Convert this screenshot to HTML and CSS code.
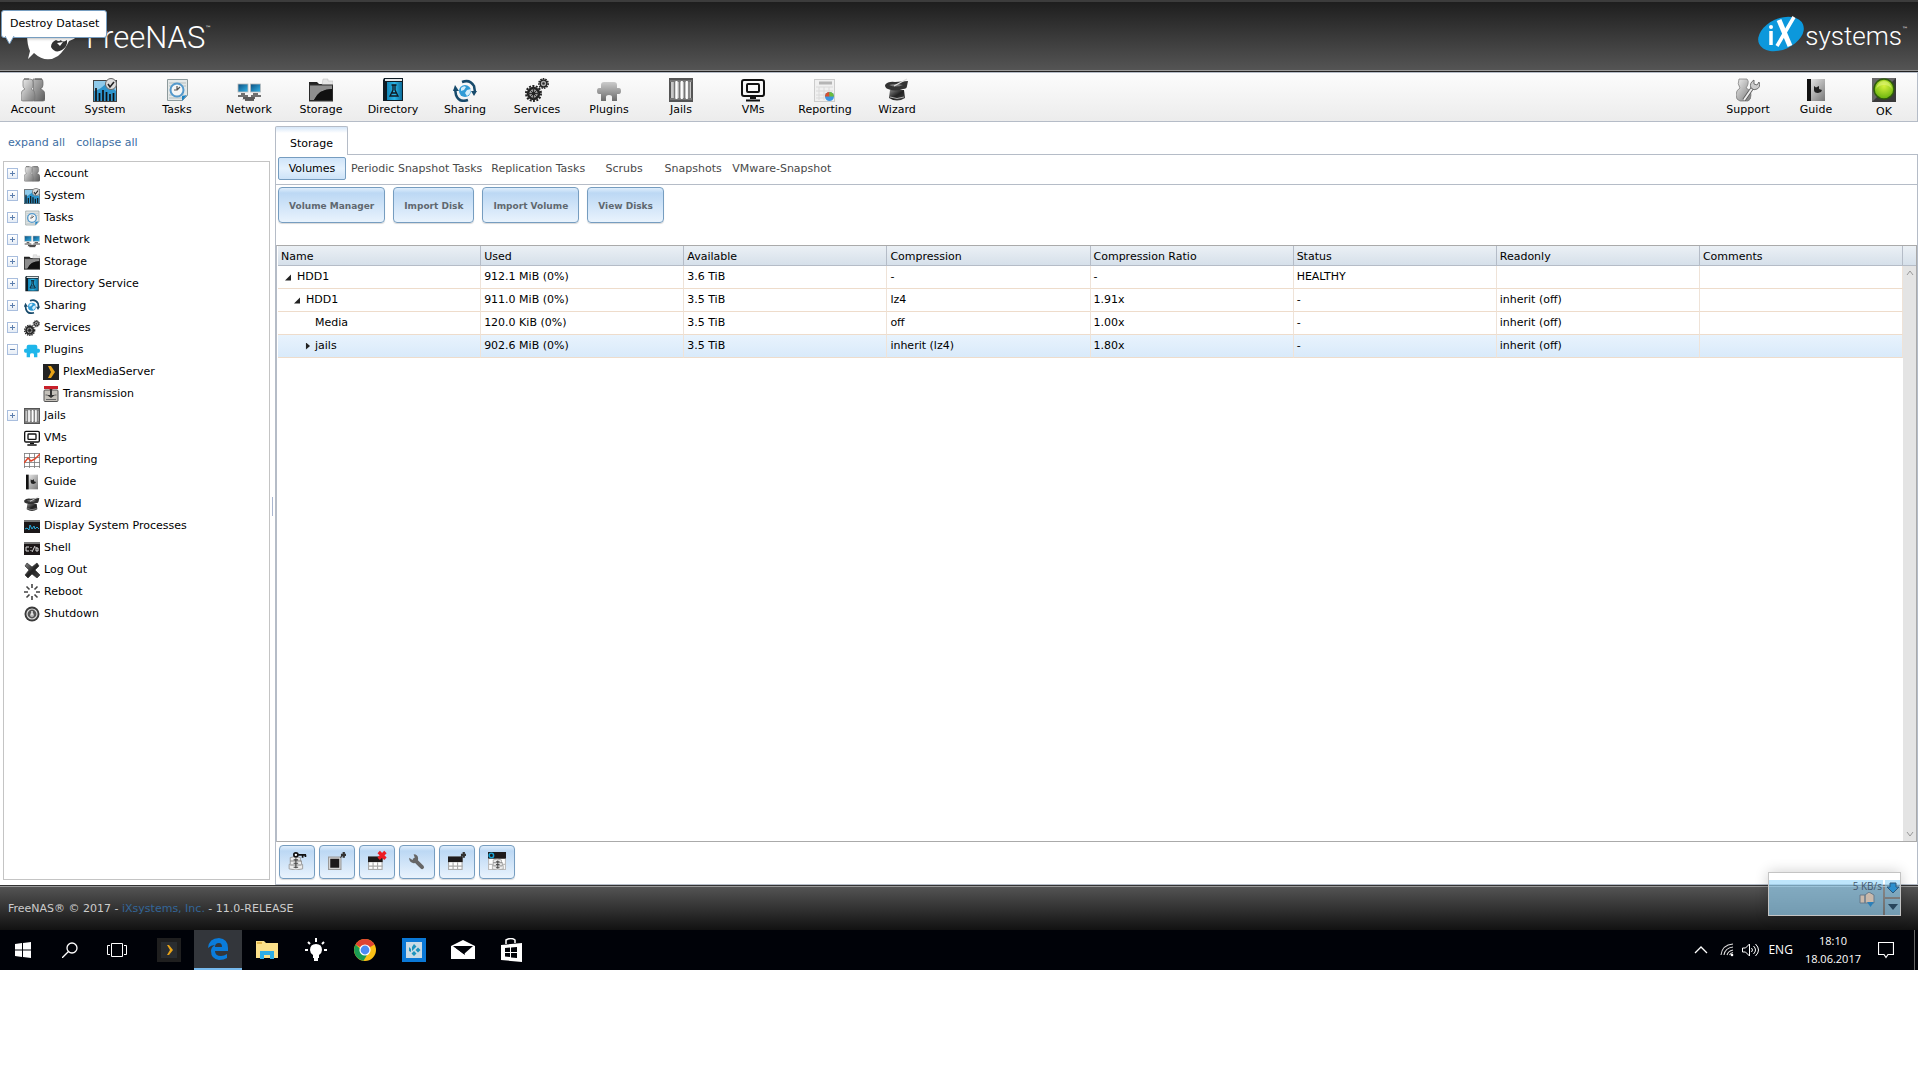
FILE: index.html
```html
<!DOCTYPE html>
<html lang="en">
<head>
    <meta charset="UTF-8">
    <meta name="viewport" content="width=device-width, initial-scale=1.0">
    <title>FreeNAS - Storage</title>
    <link rel="stylesheet" href="styles.css">
</head>
<body>
    <!-- icon set -->
    <svg class="sprite" width="0" height="0" aria-hidden="true">
        <defs>
            <linearGradient id="silver" x1="0" y1="0" x2="1" y2="1"><stop offset="0" stop-color="#f2f2f2"/><stop offset="1" stop-color="#777"/></linearGradient>
            <linearGradient id="silver2" x1="0" y1="0" x2="1" y2="1"><stop offset="0" stop-color="#bbb"/><stop offset="1" stop-color="#5a5a5a"/></linearGradient>
            <linearGradient id="dark" x1="0" y1="0" x2="1" y2="1"><stop offset="0" stop-color="#888"/><stop offset=".5" stop-color="#222"/><stop offset="1" stop-color="#444"/></linearGradient>
            <linearGradient id="sky" x1="0" y1="0" x2="1" y2="1"><stop offset="0" stop-color="#0b4f80"/><stop offset="1" stop-color="#35b5ea"/></linearGradient>
            <linearGradient id="book" x1="0" y1="0" x2="1" y2="0"><stop offset="0" stop-color="#1286b8"/><stop offset=".5" stop-color="#2bb4e6"/><stop offset="1" stop-color="#0c6c9a"/></linearGradient>
            <linearGradient id="plug" x1="0" y1="0" x2="0" y2="1"><stop offset="0" stop-color="#ccc"/><stop offset="1" stop-color="#6b6b6b"/></linearGradient>
            <radialGradient id="lamp" cx=".5" cy=".35" r=".7"><stop offset="0" stop-color="#d6f23c"/><stop offset="1" stop-color="#5fae0a"/></radialGradient>
        </defs>
        <symbol id="i-account" viewBox="0 0 24 24">
            <path d="M12 1h8q2 0 2 3v3q0 3-3 4 5 1 5 6v4q0 2-2 2h-9z" fill="url(#silver2)" stroke="#666" stroke-width=".7"/>
            <path d="M3 1h6q3 0 3 3v4q0 2-2 3 4 1 4 6v4q0 2-2 2H2q-2 0-2-2v-4q0-5 4-6-2-1-2-3V3z" fill="url(#silver)" stroke="#777" stroke-width=".7"/>
            <path d="M3 1h5M14 1h7" stroke="#555" stroke-width="1"/>
        </symbol>
        <symbol id="i-system" viewBox="0 0 24 24">
            <rect x=".5" y="2.500" width="23" height="21" fill="#8fcaea" stroke="#444"/>
            <path d="M1 13q8-2 13-9l9 9v10H1z" fill="#2d94cc"/>
            <path d="M3 23V10M6.500 23v-8M10 23V12M13.500 23v-9M17 23v-7M20.500 23v-8" stroke="#111" stroke-width="1.700"/>
            <circle cx="18" cy="6" r="5.500" fill="#ddd" stroke="#666"/>
            <path d="M15 6l2 3 4-5" fill="none" stroke="#222" stroke-width="1.600"/>
        </symbol>
        <symbol id="i-tasks" viewBox="0 0 24 24">
            <path d="M2.500 1.500h20v16l-5 5h-15z" fill="#e4e8e8" stroke="#8d9a9c"/>
            <path d="M4 5h17M4 8h17M4 17h15M4 20h13" stroke="#b5bfc0"/>
            <circle cx="12" cy="12" r="6.500" fill="#f6f6f6" stroke="#5499cc" stroke-width="2"/>
            <path d="M12 8v4H9M12 12l3-3" fill="none" stroke="#555" stroke-width="1.200"/>
            <path d="M22 17l-5 6v-5z" fill="#1d82c4"/>
        </symbol>
        <symbol id="i-network" viewBox="0 0 24 24">
            <rect x="1" y="6" width="10" height="8" fill="url(#sky)" stroke="#bbb" stroke-width=".8"/>
            <rect x="13.500" y="6" width="10" height="8" fill="url(#sky)" stroke="#bbb" stroke-width=".8"/>
            <path d="M4 16h4M16 16h5M1 18h10M14 18h10" stroke="#444" stroke-width="1.500"/>
            <path d="M7 19h10v3H5z" fill="#ccc"/><path d="M6 20h12M8 22h9" stroke="#333" stroke-width="1.500"/>
        </symbol>
        <symbol id="i-storage" viewBox="0 0 24 24">
            <path d="M0 4h8l2 2h14v17H0z" fill="#222"/>
            <path d="M13 7l1-6h5v2h5v4z" fill="#e6e6e6" stroke="#bbb" stroke-width=".5"/>
            <path d="M1 7h22v4Q10 11 5 22H1z" fill="#8e8e8e"/>
            <path d="M23 11Q10 11 5 22h18z" fill="#111"/>
            <path d="M0 7h24v16H0z" fill="none" stroke="#333"/>
        </symbol>
        <symbol id="i-directory" viewBox="0 0 24 24">
            <path d="M3 0h19v23H2V2z" fill="#0d1b24"/>
            <path d="M4 1h17v2H4z" fill="#e2e6e8"/>
            <rect x="6" y="4" width="15" height="18" fill="url(#book)"/>
            <path d="M10.500 7h5M12 7v5l-3 6h8l-3-6V7M11 15h4" fill="none" stroke="#101820" stroke-width="1.300"/>
        </symbol>
        <symbol id="i-sharing" viewBox="0 0 24 24">
            <circle cx="12" cy="13" r="6" fill="#2f9bd6"/>
            <path d="M8 10q3-3 5-1l-2 3-3 1zM14 12l4-1q0 5-4 7l-2-3z" fill="#d4eefb"/>
            <path d="M9 4Q17 1 21 8l1 6M15 22Q6 25 3 17l-1-6" fill="none" stroke="#174a6b" stroke-width="2.500"/>
            <path d="M18 13h6l-3 5zM0 13h6L2 7z" fill="#174a6b"/>
        </symbol>
        <symbol id="i-services" viewBox="0 0 24 24">
            <circle cx="8.500" cy="15.500" r="7.500" fill="none" stroke="#222" stroke-width="2" stroke-dasharray="2 1.400"/>
            <circle cx="8.500" cy="15.500" r="5.500" fill="#999" stroke="#222" stroke-width="2.500"/>
            <path d="M8.500 10v11M3 15.500h11M5 12l7 7M12 12l-7 7" stroke="#333"/>
            <circle cx="8.500" cy="15.500" r="2" fill="#222"/>
            <circle cx="18.500" cy="5.500" r="4.700" fill="none" stroke="#222" stroke-width="1.500" stroke-dasharray="1.600 1"/>
            <circle cx="18.500" cy="5.500" r="3.400" fill="#aaa" stroke="#222" stroke-width="1.500"/>
            <circle cx="18.500" cy="5.500" r="1.300" fill="#333"/>
        </symbol>
        <symbol id="i-plugins" viewBox="0 0 24 24">
            <path d="M4 10V7q0-3 3-3h10q3 0 3 3v3h2q2 0 2 3t-2 3h-2v7h-5v-4q0-2-3-2t-3 2v4H4v-7H2q-2 0-2-3t2-3z"/>
        </symbol>
        <symbol id="i-jails" viewBox="0 0 24 24">
            <rect x="1" y="1" width="22" height="22" fill="#c8c8c8" stroke="#555" stroke-width="2"/>
            <path d="M1 3h22M1 21h22" stroke="#777" stroke-width="2"/>
            <path d="M5.500 3v18M10.500 3v18M15.500 3v18M20 3v18" stroke="#777" stroke-width="1.500"/>
            <path d="M7.500 3v18M12.800 3v18M17.800 3v18" stroke="#fff" stroke-width="2"/>
        </symbol>
        <symbol id="i-vms" viewBox="0 0 24 24">
            <rect x="1" y="2" width="22" height="16" rx="2" fill="none" stroke="#111" stroke-width="2"/>
            <rect x="6" y="6" width="12" height="8" rx="1" fill="none" stroke="#111" stroke-width="2"/>
            <path d="M9 20h6M5 22.500h14" stroke="#111" stroke-width="2"/>
        </symbol>
        <symbol id="i-report" viewBox="0 0 24 24">
            <rect x="1.500" y="1.500" width="20" height="22" fill="#f0f0f0" stroke="#ccc"/>
            <path d="M6 5h13" stroke="#b5b5b5" stroke-width="3"/>
            <path d="M3 9h17M3 13h17M3 17h17M3 20h8M6 9v13M11 9v13M16 9v8" stroke="#dadada"/>
            <circle cx="16.500" cy="18.500" r="4.500" fill="#3c96e0"/>
            <path d="M16.500 18.500h-4.500a4.500 4.500 0 0 1 4.500-4.500z" fill="#d9502c"/>
            <path d="M16.500 18.500v-4.500a4.500 4.500 0 0 1 4.500 4.500z" fill="#6dbb3a"/>
        </symbol>
        <symbol id="i-chart" viewBox="0 0 16 16">
            <path d="M0 1.500h16M0 5.500h16M0 10.500h16M0 14.500h16M.5 1v15M5.500 1v15M10.500 1v15M15.500 1v15" stroke="#777" stroke-width=".8"/>
            <path d="M0 11l4-5 3 3 4-2 5-5" fill="none" stroke="#e0472c" stroke-width="1.500"/>
        </symbol>
        <symbol id="i-wizard" viewBox="0 0 24 24">
            <path d="M5 12h14l1 8q-8 5-16 0z" fill="url(#dark)"/>
            <path d="M0 7q3-4 10-3l13-1-1 5q0 3-4 3-8 3-15 0-3-1-3-4z" fill="#333"/>
            <path d="M4 7q6-2 14 0-7 3-14 0z" fill="#777"/>
            <path d="M9 8L22 1" stroke="#ddd" stroke-width="1.200"/>
            <path d="M5 19q7 3 14 0" fill="none" stroke="#aaa"/>
        </symbol>
        <symbol id="i-support" viewBox="0 0 24 24">
            <path d="M3 1h8q2 2 1 5t-2 4q5 2 5 7 0 5-3 6H4q-4-1-4-6 0-5 4-7-3-4-1-9z" fill="url(#silver)" stroke="#777" stroke-width=".7"/>
            <path d="M8 22l9-13" stroke="#555" stroke-width="3.500"/><path d="M8 22l9-13" stroke="#eee" stroke-width="2"/>
            <path d="M15 10q-2-5 3-8l0 4 3 1 2-3q2 5-2 7-3 2-6-1z" fill="#ccc" stroke="#555" stroke-width=".8"/>
        </symbol>
        <symbol id="i-guide" viewBox="0 0 24 24">
            <rect x="3" y="1" width="18" height="22" fill="url(#silver)"/>
            <rect x="3" y="1" width="4" height="22" fill="#111"/>
            <path d="M10 8l2 1.500 3-1.500v3l3 1-1 2-3 1q-4 0-4-3z" fill="#222"/>
        </symbol>
        <symbol id="i-ok" viewBox="0 0 24 24">
            <rect width="24" height="24" fill="#3a3a3a"/>
            <path d="M0 0h24L0 24z" fill="#666"/>
            <circle cx="12" cy="11" r="10" fill="url(#lamp)" stroke="#2f5c0c" stroke-width="1.500"/>
            <path d="M4 11q3-4 8-4t8 4q-2-8-8-8t-8 8z" fill="#e9f98a" opacity=".5"/>
        </symbol>
        <symbol id="i-plex" viewBox="0 0 16 16">
            <rect width="16" height="16" fill="#222"/><path d="M5 2h3l4 6-4 6H5l3-6z" fill="#e8a317"/>
        </symbol>
        <symbol id="i-trans" viewBox="0 0 16 16">
            <rect x="1" y="4" width="14" height="11.500" rx="1" fill="#c5c1ba" stroke="#555"/>
            <path d="M1 0h14v3H9.500v1h-3V3H1z" fill="#c8202a"/><path d="M7 3h2v6h3l-4 3-4-3h3z" fill="#333"/>
            <path d="M2.500 9h2M11.500 9h2M3 13.500h10" stroke="#666"/>
        </symbol>
        <symbol id="i-proc" viewBox="0 0 16 16">
            <rect x="0" y="2" width="16" height="13" fill="#1b1718"/><path d="M0 3h16" stroke="#777" stroke-width="2"/>
            <path d="M1 11l2-1 2 2 1-5 2 4 2-3 1 3 2-2 2 2" fill="none" stroke="#27a6d6"/>
        </symbol>
        <symbol id="i-shell" viewBox="0 0 16 16">
            <rect x="0" y="2" width="16" height="13" fill="#1b1718"/><path d="M0 3h16" stroke="#777" stroke-width="2"/>
            <path d="M5 7H2v4h3M7 7v1M7 10v1M11 6l-3 6M12 7v4h2V8h-2" fill="none" stroke="#ddd"/>
        </symbol>
        <symbol id="i-logout" viewBox="0 0 16 16">
            <path d="M3 1l5 4 5-4 2 3-4 4 5 5-3 3-5-4-4 4-3-3 4-5-4-4z" fill="url(#dark)" stroke="#222" stroke-width=".6"/>
        </symbol>
        <symbol id="i-reboot" viewBox="0 0 16 16">
            <path d="M8 0v4M8 12v4M0 8h4M12 8h4M2.500 2.500l3 3M10.500 10.500l3 3M13.500 2.500l-3 3M5.500 10.500l-3 3" stroke="#444" stroke-width="1.600"/>
        </symbol>
        <symbol id="i-shutdown" viewBox="0 0 16 16">
            <circle cx="8" cy="8" r="7.500" fill="#3a3a3a"/><circle cx="8" cy="8" r="5" fill="#555" stroke="#ddd" stroke-width="1.200"/>
            <circle cx="8" cy="9" r="2" fill="#bbb"/><path d="M8 5v4" stroke="#eee" stroke-width="1.500"/>
        </symbol>
        <!-- stacked disks -->
        <symbol id="i-disks" viewBox="0 0 16 16">
            <path d="M2 5q4-2 9 0v3h1v3h1v4q-6 2-12 0v-4h1z" fill="#ececec" stroke="#999" stroke-width=".8"/>
            <path d="M2 8h10M2 11.500h10" stroke="#888"/>
            <path d="M5 7h4M5 10h4M5 13.500h4M7 5.500v9" stroke="#444"/>
        </symbol>
        <symbol id="i-sheet" viewBox="0 0 16 16">
            <rect x=".5" y="4.500" width="12" height="11" fill="#fff" stroke="#aaa"/>
            <path d="M0 4h13v5H0z" fill="#1d1a1b"/><path d="M0 12.500h13M4.500 9v7M8.500 9v7" stroke="#aaa"/>
        </symbol>
        <symbol id="i-add" viewBox="0 0 16 16">
            <path d="M14 0v5M11.500 2.500h5" stroke="#333" stroke-width="2"/><path d="M11 5l2-2" stroke="#333"/>
        </symbol>
    </svg>

    <div class="screen">
        <header class="banner">
            <div class="logo">
                <svg width="56" height="48" viewBox="0 0 56 48" aria-hidden="true">
                    <path d="M2 14q0-8 20-10t32 8q0 7-10 10-4 9-11 15-12 8-24-3l-6 6 2-8Q2 26 2 14z" fill="#fff"/>
                    <path d="M31 21q-5 2-5 7 4 7 11 3 6-4 5-10-5 3-6 0-2 2-5 0z" fill="#333"/>
                    <path d="M32 24l6-1-3 4z" fill="#fff"/>
                </svg>
                <span class="logo-text">FreeNAS</span><span class="tm">™</span>
            </div>
            <div class="ix-logo">
                <svg width="46" height="36" viewBox="0 0 46 36" aria-hidden="true">
                    <ellipse cx="23" cy="18" rx="24" ry="15.500" transform="rotate(-24 23 18)" fill="#0c98dc"/>
                    <path d="M13 15v14M19 30L36 1" stroke="#fff" stroke-width="3.500"/>
                    <path d="M21 4l11 26" stroke="#fff" stroke-width="5"/>
                    <circle cx="13" cy="11" r="2" fill="#fff"/>
                </svg>
                <span class="ix-text">systems</span><span class="tm">™</span>
            </div>
        </header>

        <nav class="menu">
            <div class="menu-main">
                <a href="#"><svg><use href="#i-account"/></svg>Account</a>
                <a href="#"><svg><use href="#i-system"/></svg>System</a>
                <a href="#"><svg><use href="#i-tasks"/></svg>Tasks</a>
                <a href="#"><svg><use href="#i-network"/></svg>Network</a>
                <a href="#"><svg><use href="#i-storage"/></svg>Storage</a>
                <a href="#"><svg><use href="#i-directory"/></svg>Directory</a>
                <a href="#"><svg><use href="#i-sharing"/></svg>Sharing</a>
                <a href="#"><svg><use href="#i-services"/></svg>Services</a>
                <a href="#"><svg fill="url(#plug)"><use href="#i-plugins"/></svg>Plugins</a>
                <a href="#"><svg><use href="#i-jails"/></svg>Jails</a>
                <a href="#"><svg><use href="#i-vms"/></svg>VMs</a>
                <a href="#"><svg><use href="#i-report"/></svg>Reporting</a>
                <a href="#"><svg><use href="#i-wizard"/></svg>Wizard</a>
            </div>
            <div class="menu-side">
                <a href="#"><svg><use href="#i-support"/></svg>Support</a>
                <a href="#"><svg><use href="#i-guide"/></svg>Guide</a>
                <a href="#" class="alert"><svg><use href="#i-ok"/></svg>OK</a>
            </div>
        </nav>

        <div class="main">
            <aside class="sidebar">
                <div class="tree-links"><a href="#">expand all</a><a href="#">collapse all</a></div>
                <ul class="tree">
                    <li><button class="toggle" aria-label="Expand"></button><svg><use href="#i-account"/></svg><a href="#">Account</a></li>
                    <li><button class="toggle" aria-label="Expand"></button><svg><use href="#i-system"/></svg><a href="#">System</a></li>
                    <li><button class="toggle" aria-label="Expand"></button><svg><use href="#i-tasks"/></svg><a href="#">Tasks</a></li>
                    <li><button class="toggle" aria-label="Expand"></button><svg><use href="#i-network"/></svg><a href="#">Network</a></li>
                    <li><button class="toggle" aria-label="Expand"></button><svg><use href="#i-storage"/></svg><a href="#">Storage</a></li>
                    <li><button class="toggle" aria-label="Expand"></button><svg><use href="#i-directory"/></svg><a href="#">Directory Service</a></li>
                    <li><button class="toggle" aria-label="Expand"></button><svg><use href="#i-sharing"/></svg><a href="#">Sharing</a></li>
                    <li><button class="toggle" aria-label="Expand"></button><svg><use href="#i-services"/></svg><a href="#">Services</a></li>
                    <li><button class="toggle open" aria-label="Collapse"></button><svg fill="#1fb6ea"><use href="#i-plugins"/></svg><a href="#">Plugins</a></li>
                    <li class="child"><svg><use href="#i-plex"/></svg><a href="#">PlexMediaServer</a></li>
                    <li class="child"><svg><use href="#i-trans"/></svg><a href="#">Transmission</a></li>
                    <li><button class="toggle" aria-label="Expand"></button><svg><use href="#i-jails"/></svg><a href="#">Jails</a></li>
                    <li class="leaf"><svg><use href="#i-vms"/></svg><a href="#">VMs</a></li>
                    <li class="leaf"><svg><use href="#i-chart"/></svg><a href="#">Reporting</a></li>
                    <li class="leaf"><svg><use href="#i-guide"/></svg><a href="#">Guide</a></li>
                    <li class="leaf"><svg><use href="#i-wizard"/></svg><a href="#">Wizard</a></li>
                    <li class="leaf"><svg><use href="#i-proc"/></svg><a href="#">Display System Processes</a></li>
                    <li class="leaf"><svg><use href="#i-shell"/></svg><a href="#">Shell</a></li>
                    <li class="leaf"><svg><use href="#i-logout"/></svg><a href="#">Log Out</a></li>
                    <li class="leaf"><svg><use href="#i-reboot"/></svg><a href="#">Reboot</a></li>
                    <li class="leaf"><svg><use href="#i-shutdown"/></svg><a href="#">Shutdown</a></li>
                </ul>
            </aside>
            <div class="splitter"><span></span></div>

            <section class="content">
                <div class="tabs"><button class="tab">Storage</button></div>
                <div class="pane">
                    <div class="subtabs">
                        <button class="subtab active">Volumes</button>
                        <button class="subtab">Periodic Snapshot Tasks</button>
                        <button class="subtab">Replication Tasks</button>
                        <button class="subtab">Scrubs</button>
                        <button class="subtab">Snapshots</button>
                        <button class="subtab">VMware-Snapshot</button>
                    </div>
                    <div class="actions">
                        <button class="btn">Volume Manager</button>
                        <button class="btn">Import Disk</button>
                        <button class="btn">Import Volume</button>
                        <button class="btn">View Disks</button>
                    </div>
                    <div class="grid">
                        <div class="grid-body">
                            <table>
                                <thead>
                                    <tr><th>Name</th><th>Used</th><th>Available</th><th>Compression</th><th>Compression Ratio</th><th>Status</th><th>Readonly</th><th>Comments</th></tr>
                                </thead>
                                <tbody>
                                    <tr><td class="lvl1"><i class="arrow down"></i>HDD1</td><td>912.1 MiB (0%)</td><td>3.6 TiB</td><td>-</td><td>-</td><td>HEALTHY</td><td></td><td></td></tr>
                                    <tr><td class="lvl2"><i class="arrow down"></i>HDD1</td><td>911.0 MiB (0%)</td><td>3.5 TiB</td><td>lz4</td><td>1.91x</td><td>-</td><td>inherit (off)</td><td></td></tr>
                                    <tr><td class="lvl3"><i class="arrow"></i>Media</td><td>120.0 KiB (0%)</td><td>3.5 TiB</td><td>off</td><td>1.00x</td><td>-</td><td>inherit (off)</td><td></td></tr>
                                    <tr class="selected"><td class="lvl3"><i class="arrow right"></i>jails</td><td>902.6 MiB (0%)</td><td>3.5 TiB</td><td>inherit (lz4)</td><td>1.80x</td><td>-</td><td>inherit (off)</td><td></td></tr>
                                </tbody>
                            </table>
                        </div>
                        <div class="scroll">
                            <div class="scroll-head"></div>
                            <div class="scroll-track">
                                <svg width="8" height="6" viewBox="0 0 8 6"><path d="M1 5l3-4 3 4" fill="none" stroke="#999"/></svg>
                                <svg width="8" height="6" viewBox="0 0 8 6"><path d="M1 1l3 4 3-4" fill="none" stroke="#999"/></svg>
                            </div>
                        </div>
                    </div>
                    <div class="tools">
                        <button class="btn tool" aria-label="Change Permissions"><svg viewBox="0 0 16 16"><use href="#i-disks"/><circle cx="7" cy="2.500" r="1.800" fill="#fff" stroke="#111" stroke-width="1.500"/><path d="M9 2.500h7M13 2.500v2.500M15.500 2.500v2" stroke="#111" stroke-width="1.500"/></svg></button>
                        <button class="btn tool" aria-label="Create Snapshot"><svg viewBox="0 0 16 16"><rect x=".5" y="4.500" width="11" height="11" fill="#ddd" stroke="#999"/><rect x="2" y="6" width="8" height="8" fill="#1d1a1b"/><use href="#i-add"/></svg></button>
                        <button class="btn tool" aria-label="Destroy Dataset"><svg viewBox="0 0 16 16"><use href="#i-sheet"/><path d="M9.500 0l6 6M15.500 0l-6 6" stroke="#ed1c24" stroke-width="3"/></svg></button>
                        <button class="btn tool" aria-label="Edit Options"><svg viewBox="0 0 16 16"><path d="M6 7l6.500 6.500" stroke="#666" stroke-width="3.500" stroke-linecap="round"/><path d="M5 2q4 0 4 4T5 10Q1 9 1 5l3 2 2-2z" fill="#666"/></svg></button>
                        <button class="btn tool" aria-label="Create Dataset"><svg viewBox="0 0 16 16"><use href="#i-sheet"/><use href="#i-add"/></svg></button>
                        <button class="btn tool" aria-label="Create zvol"><svg viewBox="0 0 16 16"><path d="M0 0h16v16H0z" fill="#fff"/><path d="M0 0h16v6H0z" fill="#1d1a1b"/><path d="M0 11h16M.5 6v10M15.500 6v10M0 15.500h16" stroke="#bbb"/><circle cx="3" cy="3" r="2" fill="none" stroke="#16a5d8" stroke-width="1.300"/><svg x="3" y="3" width="13" height="13"><use href="#i-disks"/></svg></svg></button>
                    </div>
                </div>
            </section>
        </div>

        <footer class="footer">FreeNAS® © 2017 - <a href="#">iXsystems, Inc.</a> - 11.0-RELEASE</footer>

        <div class="taskbar">
            <div class="system-buttons">
                <button aria-label="Start"><svg width="16" height="16" viewBox="0 0 16 16"><path d="M0 2l7-1v6.500H0zM8 1l8-1v7.500H8zM0 8.500h7V15l-7-1zM8 8.500h8V16l-8-1z" fill="#fff"/></svg></button>
                <button aria-label="Search"><svg width="16" height="16" viewBox="0 0 16 16"><circle cx="10" cy="6" r="5" fill="none" stroke="#fff" stroke-width="1.300"/><path d="M6.500 9.500L0 16" stroke="#fff" stroke-width="1.300"/></svg></button>
                <button aria-label="Task View"><svg width="20" height="16" viewBox="0 0 20 16"><path d="M4.500 1.500h11v13h-11zM3 3.500H.5v9H3M17 3.500h2.500v9H17" fill="none" stroke="#fff"/></svg></button>
            </div>
            <div class="apps">
                <button aria-label="Plex"><svg width="24" height="24" viewBox="0 0 24 24"><path d="M0 0h24v24H0z" fill="#1f1f1f"/><path d="M4 4h16v16H4z" fill="#2a2d30"/><path d="M10 7h2l4 5-4 5h-2l3-5z" fill="#e8a317"/></svg></button>
                <button class="current" aria-label="Edge"><svg width="20" height="22" viewBox="0 0 20 22"><path d="M0 10Q1 0 11 0q9 1 9 10v3H7q0 5 6 5 3 0 6-2v4q-3 2-8 2-8-1-8-9 0-4 4-6-4 0-7 3zm7-1h7q0-4-3-4-4 0-4 4z" fill="#0a7cdb"/></svg></button>
                <button aria-label="File Explorer"><svg width="22" height="18" viewBox="0 0 22 18"><path d="M0 0h8l2 2h12v15H0z" fill="#fbe08a"/><path d="M1 1h5v2H1z" fill="#e2b64a"/><path d="M4 10h14v8h-4v-4H8v4H4z" fill="#2eade6"/></svg></button>
                <button aria-label="Tips"><svg width="22" height="24" viewBox="0 0 22 24"><path d="M11 6q6 0 6 6 0 3-3 5v3h-1v3H9v-3H8v-3q-3-2-3-5 0-6 6-6zM10 0h2v4h-2zM0 11h3v2H0zM19 11h3v2h-3z" fill="#fff"/><path d="M3 4l2 2M19 4l-2 2" stroke="#fff" stroke-width="2"/></svg></button>
                <button aria-label="Chrome"><svg width="22" height="22" viewBox="0 0 22 22"><circle cx="11" cy="11" r="11" fill="#fbc116"/><path d="M11 11L1.500 5.500a11 11 0 0 1 19 0z" fill="#df4334"/><path d="M1.500 5.500a11 11 0 0 0 8 16.300L13 16z" fill="#1a9c53"/><circle cx="11" cy="11" r="5" fill="#4c8bf5" stroke="#fff" stroke-width="1.200"/></svg></button>
                <button aria-label="Kodi"><svg width="24" height="24" viewBox="0 0 24 24"><path d="M0 0h24v24H0z" fill="#0a78d6"/><path d="M4 4h16v16H4z" fill="#c9dbe5"/><path d="M7 9l2 2v3l-2-1zM12 6l2.500 2.500L10 13v-4zM16 9.500l2.500 2.500-2.500 2.500-2.500-2.500zM12 13l2.500 2.500L12 18l-2.500-2.500z" fill="#1c93bd"/></svg></button>
                <button aria-label="Mail"><svg width="24" height="20" viewBox="0 0 24 20"><path d="M0 6l12-6 12 6v13H0z" fill="#fff"/><path d="M2 6h20l-9 8 1 1z" fill="#000208"/><path d="M2 6l11 6 1 3z" fill="#000208"/></svg></button>
                <button aria-label="Store"><svg width="22" height="24" viewBox="0 0 22 24"><path d="M0 7l21-2v19l-21-2z" fill="#fff"/><path d="M5 6V2q5-3 9 0v3" fill="none" stroke="#fff" stroke-width="1.500"/><path d="M4 10l5-.5V14H4zM10 9.500l6-.5v5h-6zM4 15h5v4l-5-.5zM10 15h6v5l-6-.5z" fill="#000208"/></svg></button>
            </div>
            <div class="tray">
                <svg class="chevron" width="14" height="8" viewBox="0 0 14 8"><path d="M1 7l6-6 6 6" fill="none" stroke="#fff" stroke-width="1.300"/></svg>
                <svg class="wifi" width="14" height="14" viewBox="0 0 14 14"><path d="M1 12Q2 2 13 1M4 12Q5 5 13 4M7 12q1-4 6-5M9.500 12q1-2 3.500-2.500" fill="none" stroke="#ddd" stroke-width="1.100"/><circle cx="12" cy="12" r="1.300" fill="#fff"/></svg>
                <svg class="sound" width="18" height="14" viewBox="0 0 18 14"><path d="M.5 5h3l4-4v12l-4-4h-3zM9.500 5q2 2 0 4M11.500 3q4 4 0 8M13.500 1q6 6 0 12" fill="none" stroke="#fff"/></svg>
                <span class="lang">ENG</span>
                <div class="clock"><span>18:10</span><span>18.06.2017</span></div>
                <svg class="notes" width="16" height="18" viewBox="0 0 16 18"><path d="M.5 1.500h15v12H10l-2 3-2-3H.5z" fill="none" stroke="#fff" stroke-width="1.200"/></svg>
            </div>
        </div>

        <div class="tooltip">Destroy Dataset
            <svg width="10" height="9" viewBox="0 0 10 9"><path d="M0 0l4.500 8L9 0" fill="#fff" stroke="#769dc0"/></svg>
        </div>

        <div class="netmeter">
            <div class="meter">
                <span>5 KB/s</span>
                <svg width="18" height="16" viewBox="0 0 18 16"><path d="M1 3h5v8H1zM6 3l4-3 5 3v8H6z" fill="#c9b9ab" stroke="#667b8c"/><path d="M8 10h7l-3.500 5z" fill="#2b80ba"/></svg>
            </div>
            <div class="meter-buttons">
                <span><svg width="12" height="12" viewBox="0 0 12 12"><path d="M3 1h6v4h3l-6 6-6-6h3z" fill="#2b8fce" stroke="#2b587c"/></svg></span>
                <span><svg width="10" height="6" viewBox="0 0 10 6"><path d="M0 0h10L5 6z" fill="#28455c"/></svg></span>
            </div>
        </div>
    </div>
</body>
</html>
```

FILE: styles.css
```css
* {
    box-sizing: border-box;
}
body {
    margin: 0;
    padding-right: 2px;
    background: #fff;
    color: #000;
    font: 11px/14px "DejaVu Sans", Verdana, sans-serif;
}
button {
    font: inherit;
    color: inherit;
    margin: 0;
    padding: 0;
    border: none;
    background: none;
    cursor: pointer;
}
a {
    color: inherit;
    text-decoration: none;
}
svg {
    display: block;
    flex: none;
}
.sprite {
    position: absolute;
}
.screen {
    position: relative;
    display: flex;
    flex-direction: column;
    height: calc(100vh - 110px);
    min-height: 700px;
}

/* banner */
.banner {
    display: flex;
    justify-content: space-between;
    height: 72px;
    flex: none;
    padding: 0 10px 0 25px;
    border-top: 2px solid #3c3c3c;
    border-bottom: 1px solid #222;
    background: linear-gradient(#1e1e1e, #555);
    box-shadow: inset 0 -1px #999;
    color: #fff;
}
.logo, .ix-logo {
    display: flex;
    align-items: flex-start;
}
.logo {
    padding-top: 17px;
}
.logo svg {
    margin-right: 5px;
}
.logo-text {
    font: 300 31px/38px Roboto, sans-serif;
}
.ix-logo {
    padding-top: 14px;
}
.ix-text {
    margin-left: 1px;
    font: 300 26px/40px Roboto, sans-serif;
}
.tm {
    font-size: 6px;
    line-height: 18px;
}
.ix-logo .tm {
    line-height: 26px;
}

/* top menu */
.menu {
    display: flex;
    justify-content: space-between;
    height: 50px;
    flex: none;
    border: 1px solid #b5bcc7;
    border-left: none;
    background: linear-gradient(#fcfcfc, #ececec);
}
.menu-main, .menu-side {
    display: flex;
    gap: 6px;
}
.menu-side {
    gap: 2px;
}
.menu a {
    display: flex;
    flex-direction: column;
    align-items: center;
    gap: 1px;
    width: 66px;
    padding-top: 5px;
}
.menu .alert {
    gap: 3px;
}
.menu svg {
    width: 24px;
    height: 24px;
}

/* left tree */
.main {
    display: flex;
    flex: 1;
    min-height: 0;
}
.sidebar {
    display: flex;
    flex-direction: column;
    width: 267px;
    margin-left: 3px;
    padding-bottom: 5px;
}
.tree-links {
    display: flex;
    gap: 11px;
    height: 39px;
    padding: 14px 5px 0;
    color: #3d6ea3;
}
.tree {
    flex: 1;
    margin: 0;
    padding: 0 0 0 3px;
    border: 1px solid #c4c4c4;
    list-style: none;
}
.tree li {
    display: flex;
    align-items: center;
    height: 22px;
}
.tree li a {
    padding-top: 1px;
}
.tree svg {
    width: 16px;
    height: 16px;
    margin: 2px 4px 0 0;
}
.tree .leaf {
    padding-left: 17px;
}
.tree .child {
    padding-left: 36px;
}
.toggle {
    width: 11px;
    height: 11px;
    margin-right: 6px;
    border: 1px solid #a9bede;
    background:
        linear-gradient(#5d7fae, #5d7fae) center / 5px 1px no-repeat,
        linear-gradient(#5d7fae, #5d7fae) center / 1px 5px no-repeat,
        linear-gradient(#fff, #e6edf6);
}
.toggle.open {
    background:
        linear-gradient(#5d7fae, #5d7fae) center / 5px 1px no-repeat,
        linear-gradient(#fff, #e6edf6);
}
.splitter {
    display: flex;
    align-items: center;
    width: 5px;
    padding: 5px 0 0 2px;
}
.splitter span {
    width: 1px;
    height: 19px;
    background: #a9b6cf;
}

/* content */
.content {
    display: flex;
    flex-direction: column;
    flex: 1;
    min-width: 0;
    padding-top: 4px;
}
.tabs {
    display: flex;
    height: 29px;
    border-bottom: 1px solid #b5bcc7;
}
.tab {
    height: 29px;
    padding: 5px 14px 0;
    border: 1px solid #b5bcc7;
    border-bottom: none;
    border-radius: 2px 2px 0 0;
    background: linear-gradient(#d5e6f8, #fff 6px);
}
.pane {
    display: flex;
    flex-direction: column;
    flex: 1;
    min-height: 0;
    border: 1px solid #b5bcc7;
    border-top: none;
}
.subtabs {
    display: flex;
    gap: 1px;
    height: 30px;
    padding: 2px 2px 0;
    border-bottom: 1px solid #b5bcc7;
    color: #494949;
}
.subtab {
    min-width: 68px;
    height: 23px;
    padding: 0 4px;
}
.subtab.active {
    border: 1px solid #769dc0;
    border-radius: 2px;
    background: linear-gradient(#cfe4f9, #e4f1fd 50%, #cde3f8);
    color: #000;
}
.actions {
    display: flex;
    gap: 8px;
    height: 60px;
    padding: 2px 2px 0;
}
.btn {
    height: 36px;
    padding: 2px 10px 0;
    border: 1px solid #769dc0;
    border-radius: 4px;
    background: linear-gradient(#dfeefc, #bcd8f4 5px, #e9f3fd);
    box-shadow: 0 1px 1px rgba(0, 0, 0, 0.15);
    color: #5f6870;
    font-size: 9px;
    font-weight: bold;
}

/* volumes grid */
.grid {
    display: flex;
    flex: 1;
    min-height: 0;
    padding-left: 1px;
    border: 1px solid #aaa;
    border-left-color: #b5bcc7;
}
.grid-body {
    flex: 1;
    min-width: 0;
}
table {
    width: 100%;
    table-layout: fixed;
    border-collapse: separate;
    border-spacing: 0;
}
th, td {
    text-align: left;
    font-weight: normal;
    white-space: nowrap;
}
th {
    height: 20px;
    padding: 2px 3px 0;
    border-right: 1px solid #b5bcc7;
    border-bottom: 1px solid #b5bcc7;
    background: linear-gradient(#ebf0f5, #d6e0ea);
}
td {
    height: 23px;
    padding: 0 3px 1px;
    border-right: 1px solid #efe3d8;
    border-bottom: 1px solid #eedccb;
}
.selected td {
    background: linear-gradient(#e8f3fd, #d9eafa);
}
td.lvl1 {
    padding-left: 7px;
}
td.lvl2 {
    padding-left: 16px;
}
td.lvl3 {
    padding-left: 25px;
}
.arrow {
    display: inline-block;
    width: 6px;
    height: 7px;
    margin-right: 6px;
    vertical-align: -1px;
}
.arrow.down {
    background: #222;
    clip-path: polygon(100% 14%, 100% 100%, 0 100%);
}
.arrow.right {
    margin: 0 4px 0 2px;
    background: #222;
    clip-path: polygon(16% 0, 84% 50%, 16% 100%);
}
.scroll {
    display: flex;
    flex-direction: column;
    width: 13px;
}
.scroll-head {
    height: 20px;
    border-bottom: 1px solid #b5bcc7;
    background: linear-gradient(#ebf0f5, #d6e0ea);
}
.scroll-track {
    display: flex;
    flex: 1;
    flex-direction: column;
    align-items: center;
    justify-content: space-between;
    padding: 4px 0;
    background: #e4e4e4;
}
.tools {
    display: flex;
    gap: 4px;
    height: 42px;
    flex: none;
    padding: 3px 3px 0;
}
.tool {
    display: flex;
    justify-content: center;
    width: 36px;
    height: 34px;
    padding: 6px 0 0;
}
.tool > svg {
    width: 18px;
    height: 18px;
    overflow: visible;
}

/* footer */
.footer {
    height: 45px;
    flex: none;
    padding: 16px 8px 0;
    border-top: 1px solid #333;
    background: linear-gradient(#555, #111);
    box-shadow: inset 0 1px #999;
    color: #ccc;
}
.footer a {
    color: #336699;
}

/* taskbar */
.taskbar {
    display: flex;
    height: 40px;
    flex: none;
    background: #000208;
    color: #fff;
    font: 12px/18px "Open Sans", sans-serif;
}
.system-buttons, .apps {
    display: flex;
    gap: 1px;
}
.apps {
    margin-left: 5px;
}
.taskbar button {
    display: flex;
    align-items: center;
    justify-content: center;
    width: 48px;
}
.taskbar .system-buttons button {
    width: 46px;
}
.taskbar .current {
    border-bottom: 2px solid #76b9ed;
    background: #33363b;
}
.tray {
    display: flex;
    align-items: center;
    margin-left: auto;
    margin-right: 3px;
    padding-right: 20px;
    border-right: 1px solid #666;
}
.chevron {
    margin-right: 12px;
}
.wifi, .sound {
    margin-right: 8px;
}
.lang {
    margin-right: 12px;
}
.clock {
    display: flex;
    flex-direction: column;
    align-items: center;
    margin-right: 17px;
    font-size: 11px;
}

/* overlays */
.tooltip {
    position: absolute;
    top: 10px;
    left: 1px;
    padding: 6px 7px 6px 8px;
    border: 1px solid #769dc0;
    border-radius: 3px;
    background: #fff;
    box-shadow: 0 1px 3px rgba(0, 0, 0, 0.25);
}
.tooltip svg {
    position: absolute;
    top: 25px;
    left: 3px;
}
.netmeter {
    position: absolute;
    right: 17px;
    bottom: 54px;
    display: flex;
    gap: 2px;
    width: 133px;
    height: 44px;
    padding-top: 7px;
    border: 1px solid #c4c4c4;
    background: linear-gradient(#fff 7px, rgba(255, 255, 255, 0.3) 7px);
    box-shadow: 0 0 14px rgba(0, 0, 0, 0.2);
}
.meter {
    display: flex;
    flex: 1;
    flex-direction: column;
    align-items: flex-end;
    padding-right: 1px;
    background: rgba(125, 205, 250, 0.5);
    color: #44566b;
    font: 10px/12px "Open Sans", sans-serif;
}
.meter svg {
    margin-right: 5px;
}
.meter-buttons {
    display: flex;
    flex-direction: column;
    gap: 2px;
    width: 15px;
}
.meter-buttons span {
    display: flex;
    flex: 1;
    align-items: center;
    justify-content: center;
    background: rgba(125, 205, 250, 0.5);
}
```
